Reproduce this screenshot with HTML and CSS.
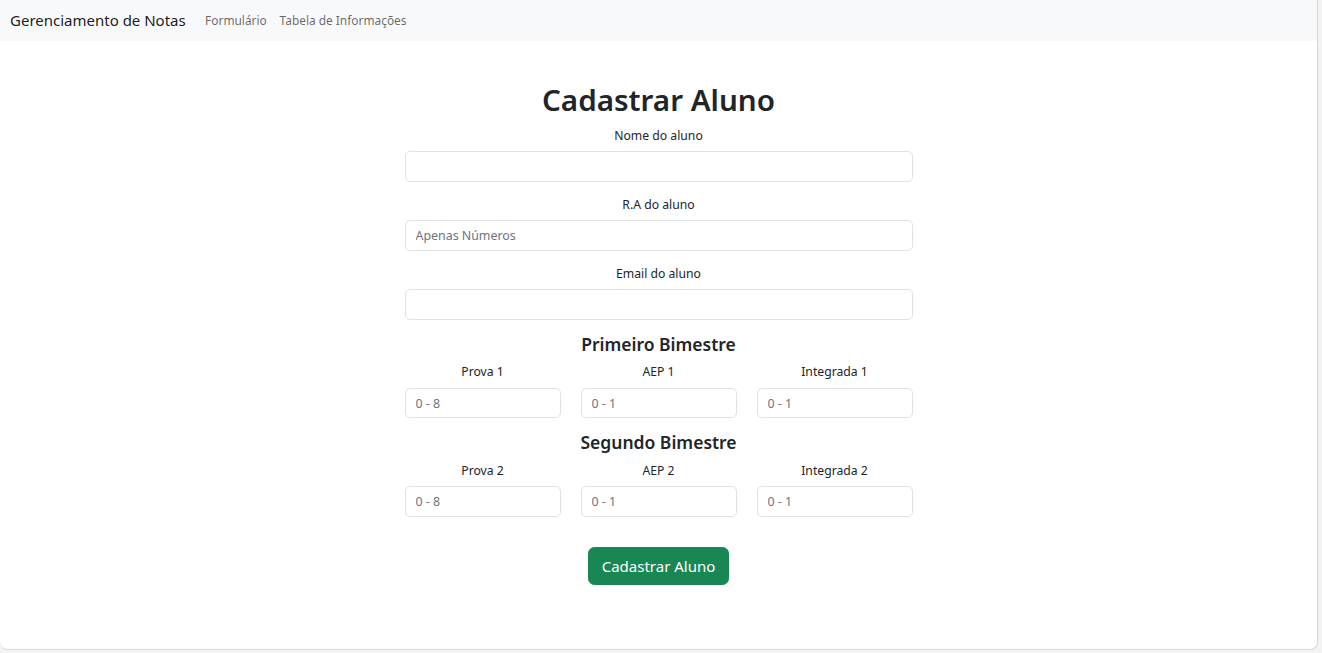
FILE: index.html
```html
<!DOCTYPE html>
<html lang="pt-BR">
<head>
<meta charset="utf-8">
<title>Gerenciamento de Notas</title>
<link rel="stylesheet" href="styles.css">
</head>
<body>
<div class="window">
  <nav class="navbar">
    <span class="brand">Gerenciamento de Notas</span>
    <a class="nav-link" href="#">Formulário</a>
    <a class="nav-link" href="#">Tabela de Informações</a>
  </nav>
  <main class="main">
    <form class="form">
      <h1 class="title">Cadastrar Aluno</h1>
      <div class="group">
        <label class="label">Nome do aluno</label>
        <input class="control" type="text">
      </div>
      <div class="group">
        <label class="label">R.A do aluno</label>
        <input class="control" type="text" placeholder="Apenas Números">
      </div>
      <div class="group">
        <label class="label">Email do aluno</label>
        <input class="control" type="email">
      </div>
      <h4 class="section">Primeiro Bimestre</h4>
      <div class="grid group">
        <div class="cell"><label class="label">Prova 1</label><input class="control" placeholder="0 - 8"></div>
        <div class="cell"><label class="label">AEP 1</label><input class="control" placeholder="0 - 1"></div>
        <div class="cell"><label class="label">Integrada 1</label><input class="control" placeholder="0 - 1"></div>
      </div>
      <h4 class="section">Segundo Bimestre</h4>
      <div class="grid group">
        <div class="cell"><label class="label">Prova 2</label><input class="control" placeholder="0 - 8"></div>
        <div class="cell"><label class="label">AEP 2</label><input class="control" placeholder="0 - 1"></div>
        <div class="cell"><label class="label">Integrada 2</label><input class="control" placeholder="0 - 1"></div>
      </div>
      <div class="actions">
        <button class="btn" type="button">Cadastrar Aluno</button>
      </div>
    </form>
  </main>
</div>
</body>
</html>
```

FILE: styles.css
```css
html, body {
  margin: 0;
  padding: 0;
  background: #f3f3f3;
}
body {
  font-family: "Noto Sans", "Open Sans", sans-serif;
  color: #212529;
  font-size: 12.2px;
  line-height: 1.5;
}
.window {
  width: 1318px;
  height: 650px;
  background: #fff;
  border-right: 1px solid #d6d6d6;
  border-bottom: 1px solid #d6d6d6;
  border-bottom-left-radius: 8px;
  border-bottom-right-radius: 8px;
  overflow: hidden;
  box-sizing: border-box;
}
.navbar {
  height: 41px;
  background: #f8f9fa;
  display: flex;
  align-items: center;
  padding: 0 10px;
}
.brand {
  font-size: 15px;
  color: rgba(0,0,0,.9);
  margin-right: 13px;
}
.nav-link {
  color: rgba(0,0,0,.6);
  text-decoration: none;
  padding: 0 6.4px;
  font-size: 11.9px;
}
.main {
  display: flex;
  justify-content: center;
  padding-top: 40px;
}
.form {
  width: 508px;
  display: flex;
  flex-direction: column;
}
.title {
  margin: 0 0 6.4px;
  font-size: 29.6px;
  font-weight: 600;
  line-height: 38.4px;
  text-align: center;
}
.group {
  margin-bottom: 12.8px;
  display: flex;
  flex-direction: column;
}
.label {
  display: block;
  text-align: center;
  margin-bottom: 6.4px;
  font-size: 12.2px;
  line-height: 19.2px;
}
.control {
  display: block;
  box-sizing: border-box;
  width: 100%;
  height: 30.6px;
  padding: 4.8px 10px;
  font: inherit;
  font-size: 12.4px;
  color: #212529;
  border: 1px solid #dee2e6;
  border-radius: 5px;
  background: #fff;
  outline: none;
}
.control::placeholder {
  color: #6c757d;
  opacity: 1;
}
.section {
  margin: 0 0 6.4px;
  font-size: 17.5px;
  font-weight: 600;
  line-height: 23px;
  text-align: center;
}
.grid {
  display: grid;
  grid-template-columns: repeat(3, 1fr);
  gap: 20px;
}
.cell {
  display: flex;
  flex-direction: column;
}
.actions {
  display: flex;
  justify-content: center;
  margin-top: 17.5px;
}
.btn {
  font: inherit;
  font-size: 15px;
  height: 38px;
  padding: 0 13px;
  color: #fff;
  background: #198754;
  border: 1px solid #198754;
  border-radius: 6.4px;
}
```
